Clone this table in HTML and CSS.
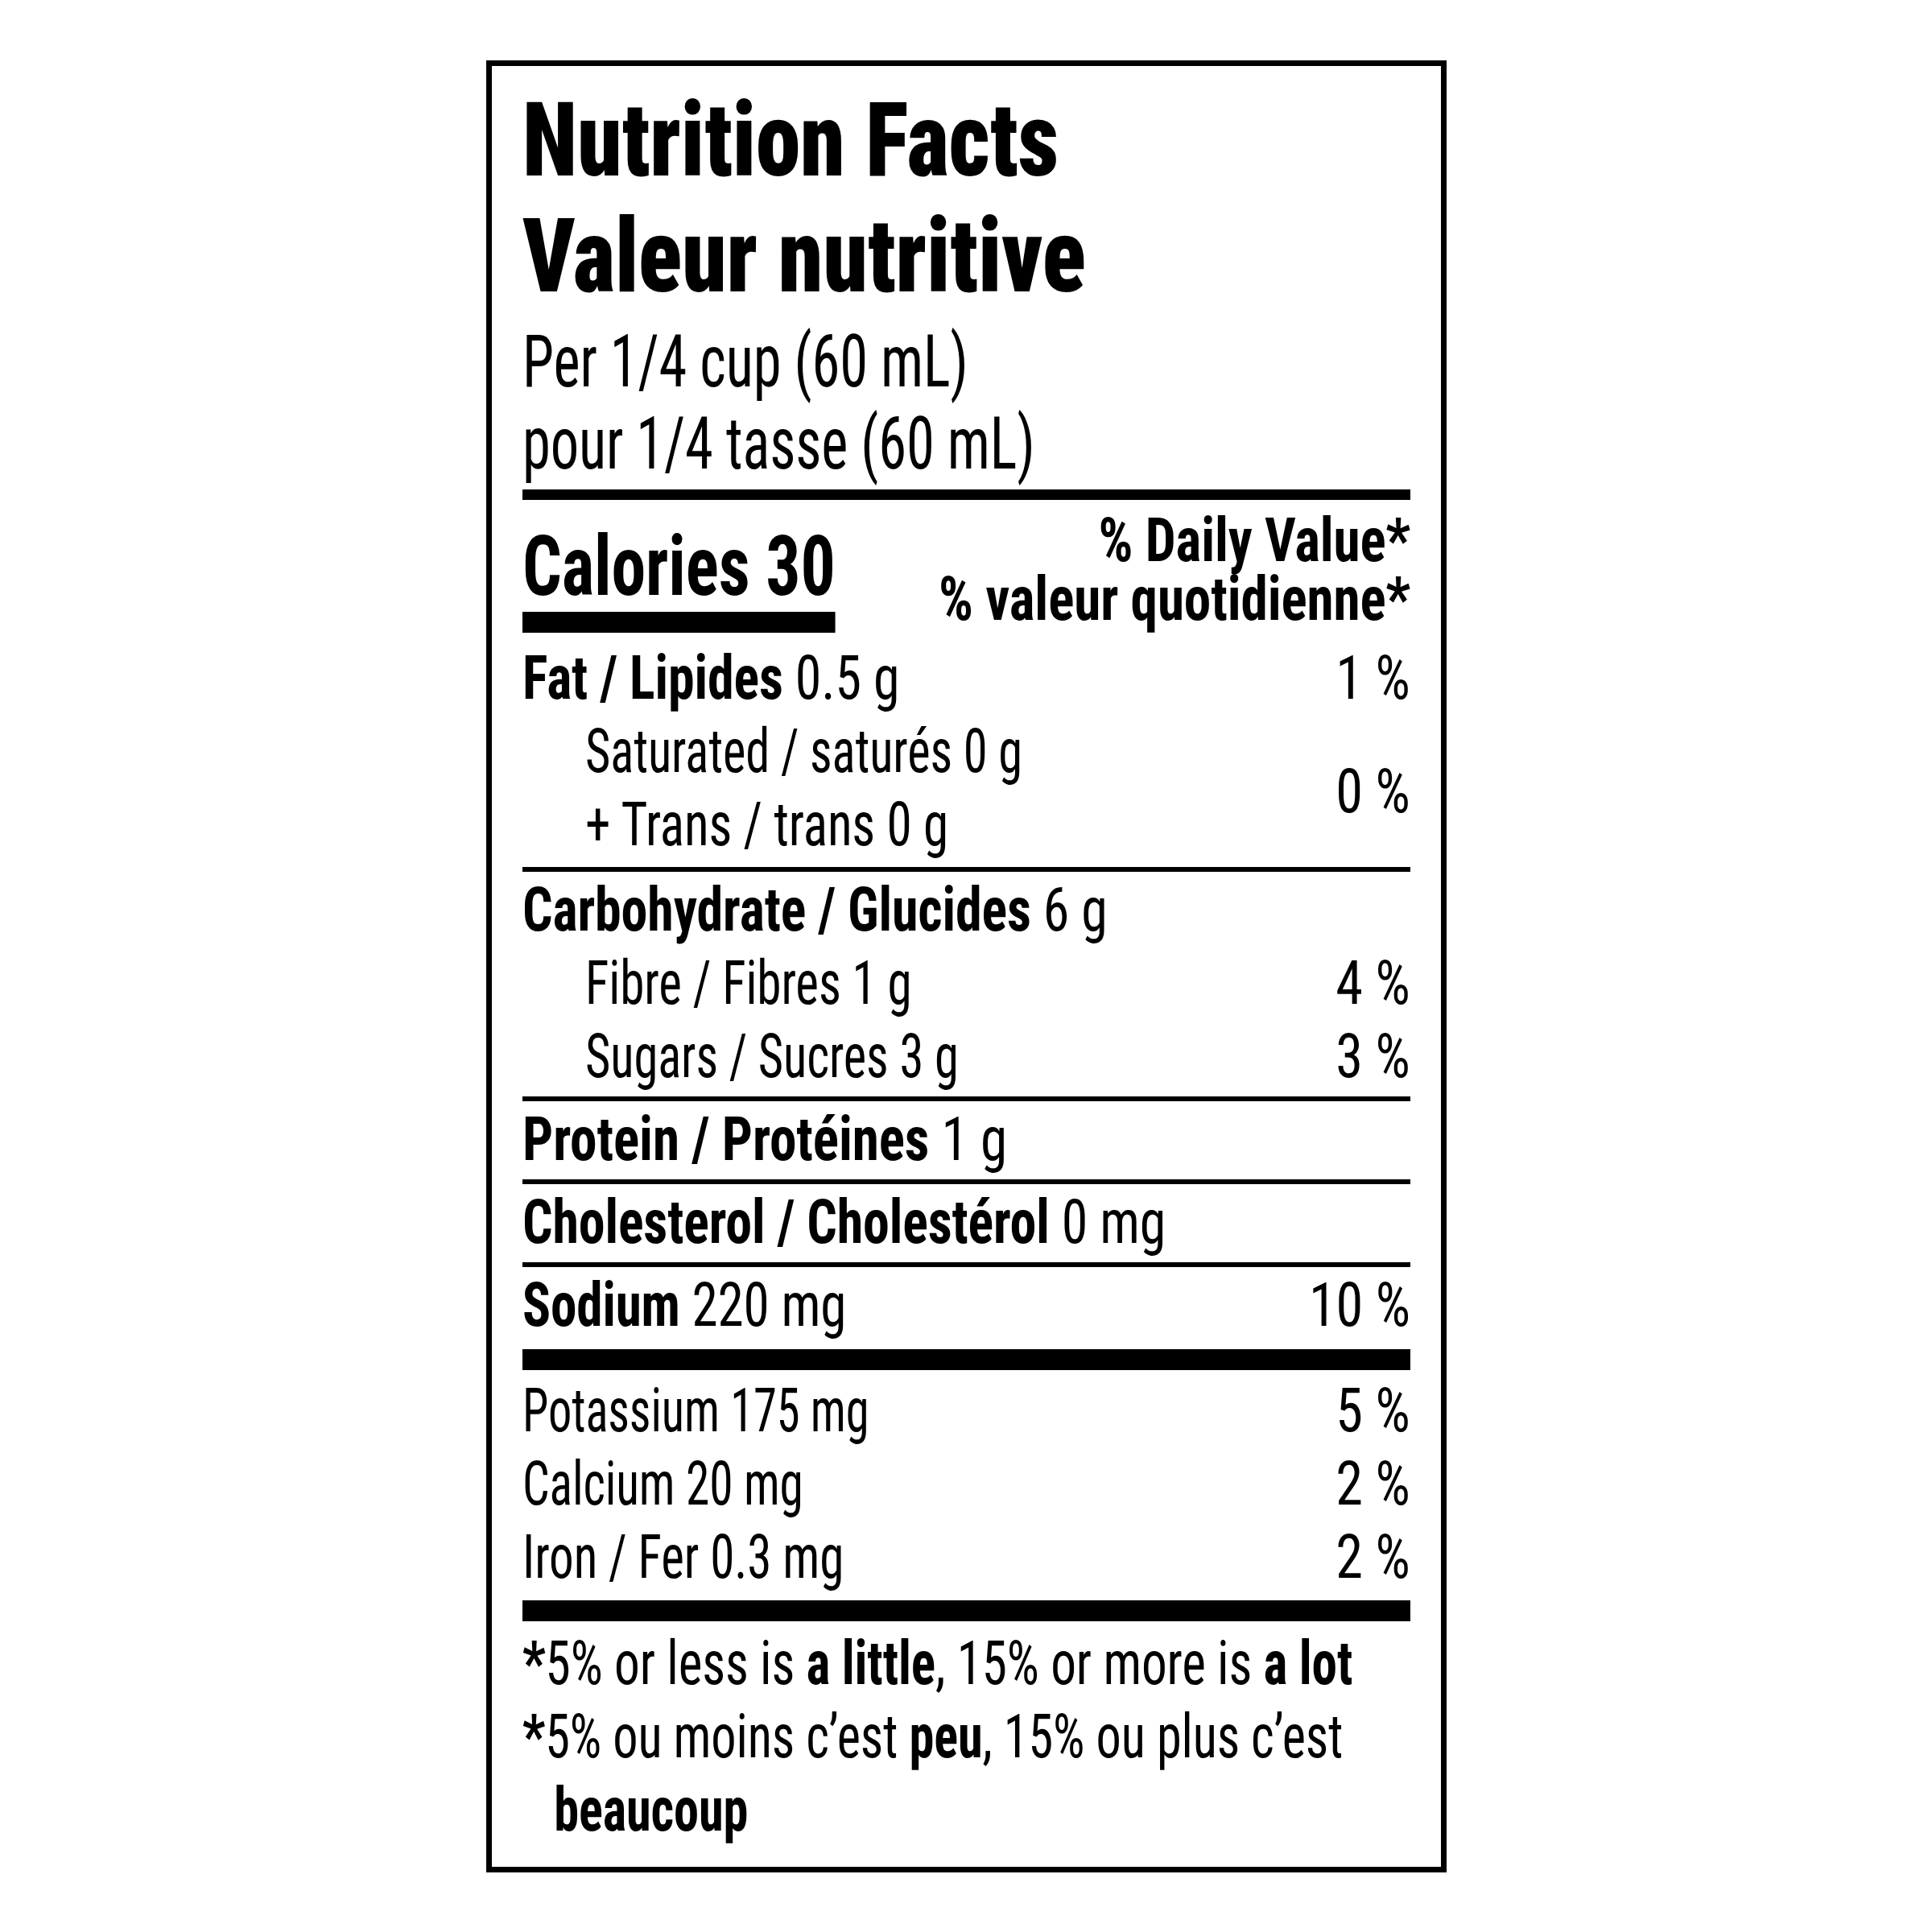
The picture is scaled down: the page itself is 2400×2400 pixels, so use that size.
FILE: index.html
```html
<!DOCTYPE html>
<html lang="en">
<head>
<meta charset="utf-8">
<title>Nutrition Facts / Valeur nutritive</title>
<link rel="stylesheet" href="styles.css">
</head>
<body>
<div class="label">
  <h1 class="title">Nutrition Facts<br>Valeur nutritive</h1>
  <p class="serving">Per 1/4 cup (60 mL)<br>pour 1/4 tasse (60 mL)</p>
  <div class="bar bar-head"></div>

  <div class="cal-row">
    <div class="cal-cell"><div class="calories">Calories 30</div></div>
    <div class="dv"><div class="dv-line">% Daily Value*</div><div class="dv-line">% valeur quotidienne*</div></div>
  </div>

  <div class="section section-fat">
    <div class="row"><span class="name bold-line"><b>Fat / Lipides</b> 0.5 g</span><span class="pct">1 %</span></div>
    <div class="row">
      <div class="subs">
        <span class="name reg-line sub">Saturated / saturés 0 g</span>
        <span class="name reg-line sub w-trans">+ Trans / trans 0 g</span>
      </div>
      <span class="pct pct-mid">0 %</span>
    </div>
  </div>

  <div class="section ruled">
    <div class="row"><span class="name bold-line"><b>Carbohydrate / Glucides</b> 6 g</span></div>
    <div class="row"><span class="name reg-line sub w-fibre">Fibre / Fibres 1 g</span><span class="pct">4 %</span></div>
    <div class="row"><span class="name reg-line sub">Sugars / Sucres 3 g</span><span class="pct">3 %</span></div>
  </div>

  <div class="section ruled">
    <div class="row"><span class="name bold-line w-protein"><b>Protein / Protéines</b> 1 g</span></div>
  </div>

  <div class="section ruled">
    <div class="row"><span class="name bold-line"><b>Cholesterol / Cholestérol</b> 0 mg</span></div>
  </div>

  <div class="section ruled section-sodium">
    <div class="row"><span class="name mixed-line"><b>Sodium</b> 220 mg</span><span class="pct">10 %</span></div>
  </div>
  <div class="bar bar-thick"></div>

  <div class="section section-minerals">
    <div class="row"><span class="name reg-line w-pot">Potassium 175 mg</span><span class="pct">5 %</span></div>
    <div class="row"><span class="name reg-line w-cal">Calcium 20 mg</span><span class="pct">2 %</span></div>
    <div class="row"><span class="name reg-line w-iron">Iron / Fer 0.3 mg</span><span class="pct">2 %</span></div>
  </div>
  <div class="bar bar-thick"></div>

  <div class="footnote">
    <p class="note note-en"><b>*</b>5% or less is <b>a little</b>, 15% or more is <b>a lot</b></p>
    <p class="note note-fr"><b>*</b>5% ou moins c’est <b>peu</b>, 15% ou plus c’est<br><b>beaucoup</b></p>
  </div>
</div>
</body>
</html>
```
FILE: styles.css
```css
html, body {
  margin: 0;
  padding: 0;
  background: #ffffff;
}

body {
  padding-top: 75px;
  font-family: "Roboto Condensed", "Liberation Sans", sans-serif;
  font-weight: 450;
  color: #000000;
}

.label {
  box-sizing: border-box;
  width: 1193px;
  margin: 0 auto;
  border: 7px solid #000000;
  padding: 20px 38px 25px;
  letter-spacing: -0.01em;
}

/* condensing helpers: the label face is narrower than the available one */
.title,
.serving,
.calories,
.name,
.note {
  transform-origin: left center;
  white-space: nowrap;
}

.dv,
.pct {
  transform-origin: right center;
  white-space: nowrap;
}

.title {
  margin: 0;
  font-size: 128px;
  line-height: 144px;
  font-weight: 900;
  transform: scaleX(0.875);
}

.serving {
  margin: 8px 0 0;
  font-size: 91px;
  line-height: 102px;
  font-weight: 450;
  transform: scaleX(0.775);
}

.bar {
  background: #000000;
}

.bar-head {
  height: 13px;
  margin-top: 6px;
}

.bar-thick {
  height: 26px;
}

.cal-row {
  display: grid;
  grid-template-columns: minmax(0, 1fr) auto;
  align-items: start;
}

.cal-cell {
  min-width: 0;
}

.calories {
  display: inline-block;
  margin-top: 31px;
  padding-bottom: 4px;
  border-bottom: 26px solid #000000;
  font-size: 104px;
  line-height: 104px;
  font-weight: 750;
  transform: scaleX(0.825);
}

.dv {
  margin-top: 14px;
  font-size: 76px;
  font-weight: 750;
  text-align: right;
  transform: scaleX(0.885);
}

.dv-line {
  height: 73px;
  line-height: 73px;
}

.section {
  font-size: 76px;
  line-height: 91px;
}

.section-fat {
  padding: 11px 0 7px;
}

.ruled {
  border-top: 6px solid #000000;
  padding: 2px 0 4px;
}

.section-sodium {
  padding-bottom: 9px;
}

.section-minerals {
  padding: 5px 0 8px;
}

.row {
  display: flex;
  justify-content: space-between;
  align-items: center;
}

.subs {
  display: flex;
  flex-direction: column;
  align-items: flex-start;
}

.name {
  display: inline-block;
}

.name b,
.note b {
  font-weight: 750;
}

.bold-line {
  transform: scaleX(0.868);
}

.mixed-line {
  transform: scaleX(0.857);
}

.reg-line {
  transform: scaleX(0.797);
}

.w-trans {
  transform: scaleX(0.832);
}

.w-fibre {
  transform: scaleX(0.805);
}

.w-protein {
  transform: scaleX(0.886);
}

.w-pot {
  transform: scaleX(0.77);
}

.w-cal {
  transform: scaleX(0.782);
}

.w-iron {
  transform: scaleX(0.805);
}

.sub {
  margin-left: 78px;
}

.pct {
  display: inline-block;
  text-align: right;
  transform: scaleX(0.9);
}

.pct-mid {
  padding-top: 8px;
}

.footnote {
  padding-top: 7px;
  font-size: 76px;
  line-height: 91px;
}

.note {
  margin: 0;
  padding-left: 48px;
  text-indent: -48px;
}

.note-en {
  transform: scaleX(0.833);
}

.note-fr {
  transform: scaleX(0.82);
}
```
